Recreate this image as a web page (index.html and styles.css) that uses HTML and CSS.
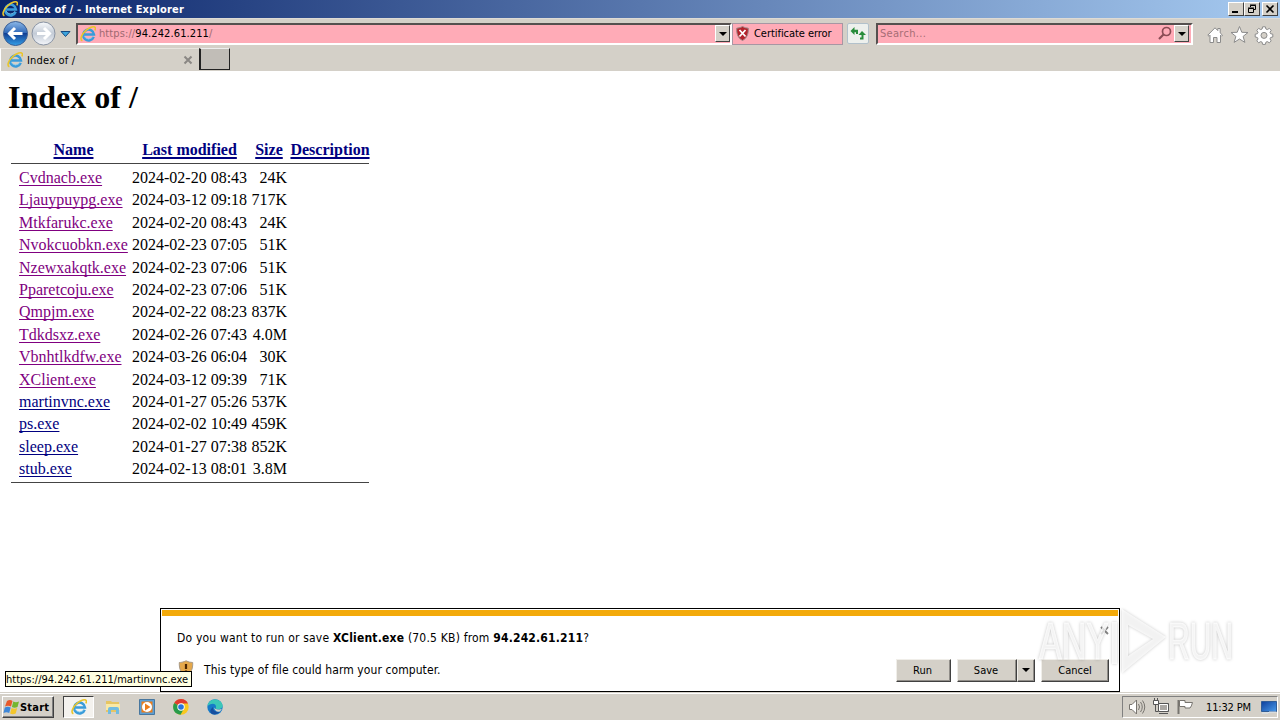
FILE: index.html
```html
<!DOCTYPE html>
<html lang="en">
<head>
<meta charset="utf-8">
<title>Index of /</title>
<link rel="stylesheet" href="styles.css">
</head>
<body>
<svg width="0" height="0" class="defs">
  <defs>
    <linearGradient id="blue" x1="0" y1="0" x2="0" y2="1"><stop offset="0" stop-color="#8db9e8"/><stop offset=".48" stop-color="#2f68b8"/><stop offset=".5" stop-color="#123f93"/><stop offset="1" stop-color="#35a0e8"/></linearGradient>
    <linearGradient id="pale" x1="0" y1="0" x2="0" y2="1"><stop offset="0" stop-color="#f8fafc"/><stop offset=".5" stop-color="#c3cbd6"/><stop offset="1" stop-color="#f4f6fa"/></linearGradient>
    <linearGradient id="screen" x1="0" y1="0" x2="1" y2="1"><stop offset="0" stop-color="#0d3f9c"/><stop offset="1" stop-color="#4a9bea"/></linearGradient>
    <symbol id="ie" viewBox="0 0 16 16">
      <path d="M13.7 10.8A5.4 5.4 0 1 1 14 8.6H4.6" fill="none" stroke="#3a9cda" stroke-width="2.5"/>
      <path d="M13 10.2A5 5 0 0 1 4 10" fill="none" stroke="#7ecbf3" stroke-width=".8"/>
      <path d="M2.4 14.8C-.6 13.4 1.8 8 6 4.400 9.800 1.200 14.500-.3 15.300 1.700c.3.800 0 1.800-.5 2.700" fill="none" stroke="#e9c52c" stroke-width="1.600"/>
    </symbol>
  </defs>
</svg>
<div class="desktop">
  <header class="titlebar">
    <svg class="ie16"><use href="#ie"/></svg>
    <span class="title">Index of / - Internet Explorer</span>
    <div class="winbtns">
      <span class="wb"><svg width="14" height="12"><path d="M3 9h6" stroke="#000" stroke-width="2"/></svg></span>
      <span class="wb"><svg width="14" height="12"><path d="M5.500 4V2.500h5v4H9M5 2h6M3.500 5.500h5v4h-5zM3 5h6" fill="none" stroke="#000"/></svg></span>
      <span class="wb close"><svg width="14" height="12"><path d="M3.500 2.500l7 7M10.500 2.500l-7 7" stroke="#000" stroke-width="1.600"/></svg></span>
    </div>
  </header>

  <div class="navbar">
    <svg class="arrows" width="72" height="29" viewBox="0 0 72 29">
      <circle cx="15.500" cy="14.500" r="12" fill="url(#blue)" stroke="#3c5f94"/>
      <path d="M22.500 14.500H10M15 9l-5.500 5.500L15 20" fill="none" stroke="#fff" stroke-width="3"/>
      <circle cx="43.500" cy="14.500" r="11.500" fill="url(#pale)" stroke="#8993a3"/>
      <path d="M37 14.500h12M44 9l5.500 5.500L44 20" fill="none" stroke="#fff" stroke-width="3"/>
      <path d="M61 12.500h9l-4.500 5z" fill="#3ba4dc" stroke="#164a82"/>
    </svg>
    <div class="address">
      <svg class="ie16"><use href="#ie"/></svg>
      <span class="url">https://<b>94.242.61.211</b>/</span>
      <span class="drop"><i></i></span>
    </div>
    <div class="cert">
      <svg width="13" height="15" viewBox="0 0 13 15"><path d="M6.500.5Q9 2 12.300 2.200C12.600 8 11 12 6.500 14.500 2 12 .4 8 .7 2.200 4 2 6.500.5 6.500.5z" fill="#b4232c" stroke="#9d8a8a"/><path d="M3.500 4l6 6.500M9.500 4l-6 6.500" stroke="#fff" stroke-width="1.800"/></svg>
      <span class="certtext">Certificate error</span>
    </div>
    <div class="refresh"><svg width="20" height="19" fill="#278c3a"><path d="M2.500 7L6.500 3v2.700H10V10H8V8.300H6.500V11z"/><path d="M14 7l4 4h-2.500v4.500H12V13.500h1.500V11H10.500z"/></svg></div>
    <div class="search">
      <span class="ph">Search...</span>
      <svg width="15" height="15"><circle cx="8.500" cy="5.500" r="4" fill="none" stroke="#8b4c55" stroke-width="1.700"/><path d="M5.500 8.500l-4.500 4.500" stroke="#8b4c55" stroke-width="2.200"/></svg>
      <span class="drop"><i></i></span>
    </div>
    <svg class="tools" width="68" height="20" viewBox="0 0 68 20">
      <g fill="#fff" stroke="#8b8b8b" stroke-width="1">
      <path d="M.8 10.200L8 2.800l2.800 2.800V3.500h2.400v4.400l2.300 2.300-1 1-1-1v7.300H10v-5H6.500v5H3v-7.300l-1 1z"/>
      <path d="M32.500 1.500l2.300 5.800 6.200.2-4.900 3.900 1.800 6-5.400-3.400-5.400 3.400 1.800-6L24 7.500l6.200-.2z"/>
      <path d="M55.600 1.800h2.800l.5 2.200 1.400.6 2-1.200 1.900 1.900-1.200 2 .6 1.400 2.200.5v2.800l-2.200.5-.6 1.400 1.200 2-1.900 1.900-2-1.200-1.400.6-.5 2.200h-2.800l-.5-2.200-1.400-.6-2 1.200-1.900-1.900 1.200-2-.6-1.400-2.200-.5V9.200l2.200-.5.600-1.400-1.200-2 1.900-1.900 2 1.200 1.400-.6z"/>
      <circle cx="57" cy="10.400" r="3" fill="#d4d0c8"/></g>
    </svg>
  </div>

  <div class="tabs">
    <div class="tab"><svg class="ie16"><use href="#ie"/></svg><span class="tabtext">Index of /</span>
      <svg width="10" height="10"><path d="M1.500 1.500l7 7M8.500 1.500l-7 7" stroke="#8a8784" stroke-width="2"/></svg></div>
    <div class="newtab"></div>
  </div>

  <main class="page">
    <h1>Index of /</h1>
    <div class="listing">
      <div class="row head"><a>Name</a><a>Last modified</a><a>Size</a><a>Description</a></div>
      <div class="rows">
      <div class="row"><a>Cvdnacb.exe</a><span>2024-02-20 08:43</span><span>24K</span></div>
      <div class="row"><a>Ljauypuypg.exe</a><span>2024-03-12 09:18</span><span>717K</span></div>
      <div class="row"><a>Mtkfarukc.exe</a><span>2024-02-20 08:43</span><span>24K</span></div>
      <div class="row"><a>Nvokcuobkn.exe</a><span>2024-02-23 07:05</span><span>51K</span></div>
      <div class="row"><a>Nzewxakqtk.exe</a><span>2024-02-23 07:06</span><span>51K</span></div>
      <div class="row"><a>Pparetcoju.exe</a><span>2024-02-23 07:06</span><span>51K</span></div>
      <div class="row"><a>Qmpjm.exe</a><span>2024-02-22 08:23</span><span>837K</span></div>
      <div class="row"><a>Tdkdsxz.exe</a><span>2024-02-26 07:43</span><span>4.0M</span></div>
      <div class="row"><a>Vbnhtlkdfw.exe</a><span>2024-03-26 06:04</span><span>30K</span></div>
      <div class="row"><a>XClient.exe</a><span>2024-03-12 09:39</span><span>71K</span></div>
      <div class="row new"><a>martinvnc.exe</a><span>2024-01-27 05:26</span><span>537K</span></div>
      <div class="row new"><a>ps.exe</a><span>2024-02-02 10:49</span><span>459K</span></div>
      <div class="row new"><a>sleep.exe</a><span>2024-01-27 07:38</span><span>852K</span></div>
      <div class="row new"><a>stub.exe</a><span>2024-02-13 08:01</span><span>3.8M</span></div>
      </div>
    </div>
  </main>

  <section class="notice">
    <div class="stripe"></div>
    <div class="line1"><p class="question">Do you want to run or save <b>XClient.exe</b> (70.5 KB) from <b>94.242.61.211</b>?</p>
      <svg width="9" height="9"><path d="M1 1l7 7M8 1l-7 7" stroke="#858585" stroke-width="1.900"/></svg></div>
    <div class="line2">
      <svg class="shield" width="16" height="17" viewBox="0 0 16 17"><path d="M8 .8Q11 2.500 14.700 2.500C15 9 13 13.500 8 16.200 3 13.500 1 9 1.300 2.500 5 2.500 8 .8 8 .8z" fill="#e5a84a" stroke="#a99a86"/><path d="M8 4v5M8 10.500v2" stroke="#4a2500" stroke-width="2.200"/></svg>
      <p class="warn">This type of file could harm your computer.</p>
      <span class="btn run">Run</span><span class="btn save">Save</span><span class="btn arrow"><i></i></span><span class="btn cancel">Cancel</span>
    </div>
  </section>

  <div class="tip"><span>https://94.242.61.211/martinvnc.exe</span></div>

  <svg class="mark" width="248" height="80" viewBox="0 0 248 80">
    <g fill="#fff" fill-opacity=".75" stroke="#fff" stroke-opacity=".75" stroke-width="1" font-size="52" font-family="Liberation Sans, Arial, sans-serif">
      <text x="7" y="54" textLength="70" lengthAdjust="spacingAndGlyphs">ANY</text>
      <text x="136" y="54" textLength="65" lengthAdjust="spacingAndGlyphs">RUN</text>
      <path stroke="none" fill-rule="evenodd" d="M90 4L134 32 90 68zM96 20V51L121 34z"/>
      <path stroke="none" d="M80 17h5v42h-5z"/>
    </g>
  </svg>

  <footer class="taskbar">
    <div class="start"><svg width="17" height="16" viewBox="0 0 17 16"><path d="M4 2q3-2 5.500 0L8 7.500Q5 6 2 7.500z" fill="#e8592a"/><path d="M10.300 2.500q2.500 1.500 5.700 0L14.500 8q-3 1.500-5.600 0z" fill="#74b62e"/><path d="M1.800 8.500q3-1.500 5.900 0L6.200 14Q3.500 12.500.5 14z" fill="#3e87d8"/><path d="M8.600 9q2.700 1.500 5.600 0l-1.500 5.500q-3 1.500-5.600 0z" fill="#f3c62c"/></svg><span class="starttext">Start</span></div>
    <div class="task"><svg class="ie16"><use href="#ie"/></svg></div>
    <svg class="quick" width="118" height="18" viewBox="0 0 118 18">
      <path d="M1 3h5l1 1h7v10H1z" fill="#e6c563"/><path d="M1 6h14v6H1z" fill="#fae9a5"/><path d="M3 16v-5q0-2 2-2h7q2 0 2 2v5h-3v-4H6v4z" fill="#72bce0"/>
      <path d="M34.500 1.500h15v15h-15z" fill="#5b9fd6" stroke="#48779f"/><path d="M36.500 3.500h11v11h-11z" fill="#ed7d1b"/><circle cx="42" cy="9" r="5" fill="#fff"/><path d="M40 5.500v7L45.500 9z" fill="#ed7d1b"/>
      <circle cx="76" cy="9" r="7.700" fill="#f9c81f"/><path d="M76 9L69.200 5A7.700 7.700 0 0 1 83 5.500H76z" fill="#df3b30"/><path d="M69.200 5A7.700 7.700 0 0 0 75.500 16.700L79 10.500 76 9z" fill="#299b4b"/><circle cx="76" cy="9" r="3.700" fill="#fff"/><circle cx="76" cy="9" r="2.800" fill="#2874dc"/>
      <circle cx="110" cy="9" r="7.700" fill="#167ac8"/><path d="M102.500 8C104-1 117 0 117.700 8c0 3-5 4-7.200 2.500 2-4-2.500-7-8-2.500z" fill="#3bc7b8"/><path d="M108 9q-1 5 7 5-4 3.500-8 2-4-3 1-7z" fill="#174f9f"/><path d="M109 9.500q2 3.500 8 1.200l-2 2.800q-5 1-6-4z" fill="#d4d0c8"/>
    </svg>
    <div class="tray">
      <svg width="68" height="18" viewBox="0 0 68 18" fill="none" stroke="#77746f">
        <path d="M1.500 6.500H4L8.500 2v14L4 11.500H1.500z" fill="#fff"/><path d="M10.500 6q2 3 0 6M12.500 4q3.500 5 0 10M14.500 2.500q4.500 6.500 0 13"/>
        <path d="M30.500 5.500h10v8h-10z" fill="#aaa7a3" stroke="#555"/><path d="M31.500 6.500h8v6h-8z" stroke="#fff"/><path d="M31 15.500h9M27.500 7v6.500H30" stroke="#555"/><path d="M25.500 2.500h5v4h-5zM26.500 0v2M29.500 0v2" fill="#fff" stroke="#555"/>
        <path d="M50.500 2v14" stroke-width="2"/><path d="M51.500 2.500H57v2h7.500q-1 4-2.500 5.500h-5V8.500h-5.500z" fill="#fff"/>
      </svg>
      <span class="clock">11:32 PM</span>
      <svg width="16" height="13"><path d="M.5.500h15v10H.5z" fill="url(#screen)" stroke="#305d97"/><path d="M1 12h6l1-1h7" stroke="#dce8f4" fill="none"/></svg>
    </div>
  </footer>
</div>
</body>
</html>
```
FILE: styles.css
```css
* { box-sizing: border-box; }
body { margin: 0; font: 11px/14px "DejaVu Sans Condensed", "DejaVu Sans", sans-serif; color: #000; }
p, h1 { margin: 0; }
svg { display: block; flex: none; }
.defs { position: absolute; }
.desktop { width: 1280px; height: 720px; position: relative; overflow: hidden; display: flex; flex-direction: column; background: #fff; }
.desktop span, .desktop p { white-space: nowrap; }
.ie16 { width: 16px; height: 16px; }

.titlebar { height: 18px; flex: none; display: flex; align-items: center; padding: 0 2px; background: linear-gradient(90deg, #0a246a, #a6caf0); color: #fff; }
.title { font-weight: bold; margin-left: 1px; flex: 1; letter-spacing: .19px; padding-top: 1px; }
.winbtns { display: flex; }
.wb { width: 16px; height: 14px; background: #d4d0c8; border: 1px solid; border-color: #fff #404040 #404040 #fff; }
.close { margin-left: 2px; }

.navbar { height: 30px; flex: none; display: flex; align-items: center; background: #d4d0c8; border-top: 1px solid #dedbd5; }
.arrows { margin-right: 4px; }
.address { width: 656px; height: 22px; display: flex; align-items: center; background: #ffabb7; border: 2px solid; border-color: #55504f #fff #fff #55504f; padding-left: 2px; }
.url { margin-left: 3px; flex: 1; color: #9e6971; letter-spacing: .1px; padding-top: 1px; }
.url b { color: #000; font-weight: normal; }
.drop { width: 15px; height: 17px; display: flex; align-items: center; justify-content: center; background: #d4d0c8; border: 1px solid; border-color: #fff #404040 #404040 #fff; }
i { border: 4px solid transparent; border-top-color: #000; border-bottom: 0; }
.cert { width: 111px; height: 22px; display: flex; align-items: center; background: #ffabb7; border: 1px solid #a796a3; padding-left: 3px; }
.certtext { margin-left: 5px; letter-spacing: -.05px; padding-top: 1px; }
.refresh { width: 22px; height: 21px; margin: 0 7px 0 4px; background: #edf0ed; border: 1px solid #b2c1cb; border-radius: 2px; }
.search { width: 317px; height: 22px; display: flex; align-items: center; background: #ffabb7; border: 2px solid; border-color: #55504f #fff #fff #55504f; padding: 0 2px; }
.ph { flex: 1; color: #a66d75; letter-spacing: .3px; padding-top: 1px; }
.search svg { margin-right: 1px; }
.tools { margin-left: 14px; margin-top: 3px; }

.tabs { height: 23px; flex: none; display: flex; background: #d4d0c8; }
.tab { width: 199px; height: 23px; display: flex; align-items: center; border-top: 1px solid #e8e5df; border-left: 1px solid #fff; padding: 0 6px; }
.tabtext { margin-left: 4px; flex: 1; letter-spacing: .2px; padding-top: 1px; }
.newtab { width: 31px; height: 22px; background: #c1bdb7; border: 1px solid #222; border-top-color: #eee; border-left-width: 2px; }

.page { flex: 1; padding: 8px; font: 16px/22px "Liberation Serif", "Times New Roman", serif; }
h1 { font-size: 32px; line-height: 37px; }
.listing { width: 358px; margin: 22px 0 0 3px; }
.row { display: grid; grid-template-columns: 109px 115px 36px 78px; column-gap: 4px; height: 22.4px; line-height: 22px; padding-left: 8px; }
.row > :nth-child(3) { text-align: right; }
.row a { color: #800080; text-decoration: underline; text-decoration-skip-ink: none; text-underline-offset: 2px; justify-self: start; }
.row.new a { color: #000080; }
.head { height: 25px; font-weight: bold; line-height: 24px; }
.row.head a { justify-self: center; color: #000080; text-decoration-thickness: 2px; }
.rows { border: solid #444; border-width: 1px 0; padding: 3px 0 2px; }

.notice { position: absolute; left: 160px; top: 608px; width: 960px; height: 84px; background: #fff; border: 1px solid #000; padding: 1px; }
.stripe { height: 6px; background: #f3aa0b; }
.line1, .line2 { display: flex; align-items: center; }
.line1 { height: 42px; padding: 0 9px 0 15px; justify-content: space-between; }
.line1 svg { margin-bottom: 14px; }
.line2 { height: 24px; padding: 0 9px 0 16px; }
.shield { margin-bottom: 3px; }
.warn { flex: 1; margin-left: 10px; font-size: 12px; letter-spacing: .08px; }
.question { font-size: 12px; letter-spacing: .2px; padding-top: 2px; }
.btn { height: 23px; display: flex; align-items: center; justify-content: center; background: #d4d0c8; border: 1px solid; border-color: #f0eee9 #404040 #404040 #f0eee9; box-shadow: inset -1px -1px #908d88; padding: 2px 2px 0 0; }
.run { width: 55px; margin-right: 6px; }
.save { width: 60px; }
.arrow { width: 18px; margin-right: 6px; padding: 0 1px 0 0; }
.cancel { width: 68px; padding-right: 0; }

.tip { position: absolute; left: 5px; top: 671px; width: 187px; height: 16px; background: #ffffe1; border: 1px solid #000; line-height: 15px; }
.mark { position: absolute; left: 1032px; top: 605px; filter: drop-shadow(0 0 1.5px rgba(0,0,0,.28)); }

.taskbar { height: 28px; flex: none; display: flex; align-items: center; background: #d4d0c8; border-top: 1px solid #d4d0c8; box-shadow: inset 0 1px #fff; padding: 1px 2px 0; }
.start { width: 52px; height: 22px; display: flex; align-items: center; border: 1px solid; border-color: #fff #404040 #404040 #fff; box-shadow: inset -1px -1px #808080; }
.starttext { font-weight: bold; letter-spacing: .2px; padding-top: 1px; }
.task { width: 31px; height: 22px; margin-left: 9px; display: flex; align-items: center; justify-content: center; background: #f4f2ee; border: 1px solid; border-color: #404040 #fff #fff #404040; }
.quick { margin-left: 11px; }
.tray { width: 156px; height: 22px; margin-left: auto; display: flex; align-items: center; border: 1px solid; border-color: #808080 #fff #fff #808080; padding-left: 5px; }
.clock { flex: 1; margin-left: 10px; letter-spacing: -.15px; padding-top: 1px; }
```
